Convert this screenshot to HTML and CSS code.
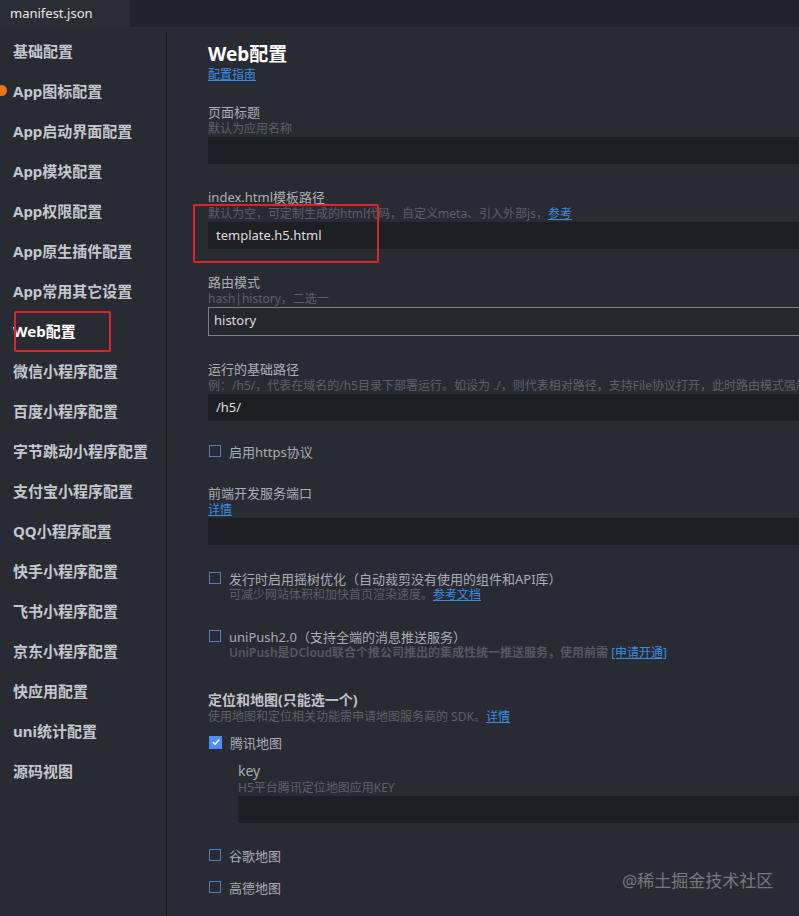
FILE: index.html
```html
<!DOCTYPE html>
<html lang="zh-CN">
<head>
    <meta charset="UTF-8">
    <meta name="viewport" content="width=device-width, initial-scale=1.0">
    <title>manifest.json</title>
    <link rel="stylesheet" href="styles.css">
</head>
<body>
    <div class="tabbar">
        <div class="tab">manifest.json</div>
    </div>
    <div class="layout">
        <div class="sidebar">
            <div class="nav-item">基础配置</div>
            <div class="nav-item"><span class="dot"></span>App图标配置</div>
            <div class="nav-item">App启动界面配置</div>
            <div class="nav-item">App模块配置</div>
            <div class="nav-item">App权限配置</div>
            <div class="nav-item">App原生插件配置</div>
            <div class="nav-item">App常用其它设置</div>
            <div class="nav-item active">Web配置<span class="mark mark-nav"></span></div>
            <div class="nav-item">微信小程序配置</div>
            <div class="nav-item">百度小程序配置</div>
            <div class="nav-item">字节跳动小程序配置</div>
            <div class="nav-item">支付宝小程序配置</div>
            <div class="nav-item">QQ小程序配置</div>
            <div class="nav-item">快手小程序配置</div>
            <div class="nav-item">飞书小程序配置</div>
            <div class="nav-item">京东小程序配置</div>
            <div class="nav-item">快应用配置</div>
            <div class="nav-item">uni统计配置</div>
            <div class="nav-item">源码视图</div>
        </div>

        <div class="content">
            <h1 class="title">Web配置</h1>
            <a class="link block">配置指南</a>

            <div class="field">
                <div class="label">页面标题</div>
                <div class="desc">默认为应用名称</div>
                <div class="input"></div>
            </div>

            <div class="field">
                <div class="label">index.html模板路径</div>
                <div class="desc">默认为空，可定制生成的html代码，自定义meta、引入外部js，<a class="link">参考</a></div>
                <div class="input">template.h5.html</div>
                <span class="mark mark-template"></span>
            </div>

            <div class="field">
                <div class="label">路由模式</div>
                <div class="desc">hash|history，二选一</div>
                <div class="input select">history</div>
            </div>

            <div class="field">
                <div class="label">运行的基础路径</div>
                <div class="desc nowrap">例：/h5/，代表在域名的/h5目录下部署运行。如设为 ./，则代表相对路径，支持File协议打开，此时路由模式强制为hash模式</div>
                <div class="input">/h5/</div>
            </div>

            <label class="check check-https">
                <span class="box"></span>启用https协议
            </label>

            <div class="field field-port">
                <div class="label">前端开发服务端口</div>
                <a class="link block">详情</a>
                <div class="input"></div>
            </div>

            <div class="check-group">
                <label class="check">
                    <span class="box"></span>发行时启用摇树优化（自动裁剪没有使用的组件和API库）
                </label>
                <div class="desc indent">可减少网站体积和加快首页渲染速度。<a class="link">参考文档</a></div>
            </div>

            <div class="check-group">
                <label class="check">
                    <span class="box"></span>uniPush2.0（支持全端的消息推送服务）
                </label>
                <div class="desc indent strong">UniPush是DCloud联合个推公司推出的集成性统一推送服务，使用前需 <a class="link">[申请开通]</a></div>
            </div>

            <div class="section">
                <div class="section-title">定位和地图(只能选一个)</div>
                <div class="desc">使用地图和定位相关功能需申请地图服务商的 SDK。<a class="link">详情</a></div>
                <label class="check check-map">
                    <span class="box checked">
                        <svg width="10" height="10" viewBox="0 0 10 10"><path d="M1.8 5.2 L4 7.3 L8.3 2.6" fill="none" stroke="#fff" stroke-width="1.5"/></svg>
                    </span>腾讯地图
                </label>
                <div class="subfield">
                    <div class="label">key</div>
                    <div class="desc">H5平台腾讯定位地图应用KEY</div>
                    <div class="input"></div>
                </div>
                <label class="check check-google">
                    <span class="box"></span>谷歌地图
                </label>
                <label class="check check-amap">
                    <span class="box"></span>高德地图
                </label>
            </div>

            <div class="watermark">@稀土掘金技术社区</div>
        </div>
    </div>
</body>
</html>
```

FILE: styles.css
```css
html, body {
    margin: 0;
    height: 100%;
}
body {
    background-color: #292b33;
    font-family: "Noto Sans", "Noto Sans CJK SC", sans-serif;
    color: #a9acb3;
    overflow: hidden;
}
.tabbar {
    height: 27px;
    background-color: #21232a;
    display: flex;
}
.tab {
    width: 130px;
    background-color: #2b2d35;
    color: #e6e6e6;
    font-size: 13px;
    line-height: 27px;
    padding-left: 10px;
    box-sizing: border-box;
}
.layout {
    display: flex;
    height: calc(100% - 27px);
    padding-top: 5px;
    box-sizing: border-box;
}
.sidebar {
    width: 166px;
    flex-shrink: 0;
    border-right: 1px solid #16171b;
    position: relative;
}
.nav-item {
    position: relative;
    height: 40px;
    line-height: 40px;
    margin-top: -1px;
    margin-bottom: 1px;
    padding-left: 13px;
    font-size: 15px;
    font-weight: bold;
    color: #c3c7ce;
    white-space: nowrap;
}
.nav-item.active {
    color: #fff;
}
.dot {
    position: absolute;
    left: -4px;
    top: 14px;
    width: 11px;
    height: 11px;
    border-radius: 50%;
    background-color: #f0741a;
}
.mark {
    position: absolute;
    border: 2px solid #dc2429;
    border-radius: 2px;
    box-sizing: border-box;
    pointer-events: none;
}
.mark-nav {
    left: 14px;
    top: 0;
    width: 97px;
    height: 41px;
}
.content {
    flex: 1;
    position: relative;
    padding: 9px 0 0 41px;
    min-width: 0;
}
.title {
    margin: 0;
    font-size: 19px;
    line-height: 26px;
    font-weight: bold;
    color: #fff;
}
.link {
    color: #3b8de0;
    text-decoration: underline;
    font-size: 12px;
}
.block {
    display: block;
    line-height: 16px;
}
.field {
    position: relative;
    margin-top: 24px;
}
.field:first-of-type {
    margin-top: 20px;
}
.label {
    font-size: 13px;
    line-height: 18px;
    color: #abaeb4;
}
.desc {
    font-size: 12px;
    line-height: 16px;
    color: #5d6068;
}
.desc.strong {
    font-weight: 600;
    color: #55585f;
}
.desc.strong .link {
    font-weight: normal;
}
.nowrap {
    white-space: nowrap;
    overflow: hidden;
}
.input {
    height: 27px;
    line-height: 27px;
    background-color: #1e1f24;
    padding-left: 8px;
    font-size: 13px;
    color: #dedede;
}
.input.select {
    background-color: #25272d;
    border: 1px solid #7b7e85;
    border-right: none;
    padding-left: 5px;
    line-height: 25px;
}
.mark-template {
    left: -15px;
    top: 16px;
    width: 186px;
    height: 59px;
}
.check {
    display: flex;
    align-items: center;
    gap: 8px;
    margin-top: 24px;
    height: 18px;
    font-size: 13px;
    color: #a9acb3;
    padding-left: 1px;
}
.check-https {
    margin-top: 21px;
}
.box {
    width: 12px;
    height: 12px;
    border: 1px solid #4b7fc9;
    box-sizing: border-box;
    display: flex;
    align-items: center;
    justify-content: center;
    flex-shrink: 0;
}
.box.checked {
    width: 13px;
    height: 13px;
    background-color: #4d8cf3;
    border-color: #4d8cf3;
}
.field-port {
    margin-top: 24px;
}
.check-group .desc.indent {
    padding-left: 21px;
}
.section {
    margin-top: 30px;
}
.section-title {
    font-size: 14px;
    line-height: 18px;
    font-weight: bold;
    color: #c0c3c9;
}
.check-map {
    margin-top: 8px;
}
.subfield {
    margin-top: 11px;
    padding-left: 30px;
}
.subfield .label {
    font-size: 14px;
    color: #a8abb1;
}
.check-google {
    margin-top: 23px;
}
.check-amap {
    margin-top: 14px;
}
.watermark {
    position: absolute;
    left: 455px;
    top: 835px;
    font-size: 17px;
    color: #76787e;
    white-space: nowrap;
}
```
